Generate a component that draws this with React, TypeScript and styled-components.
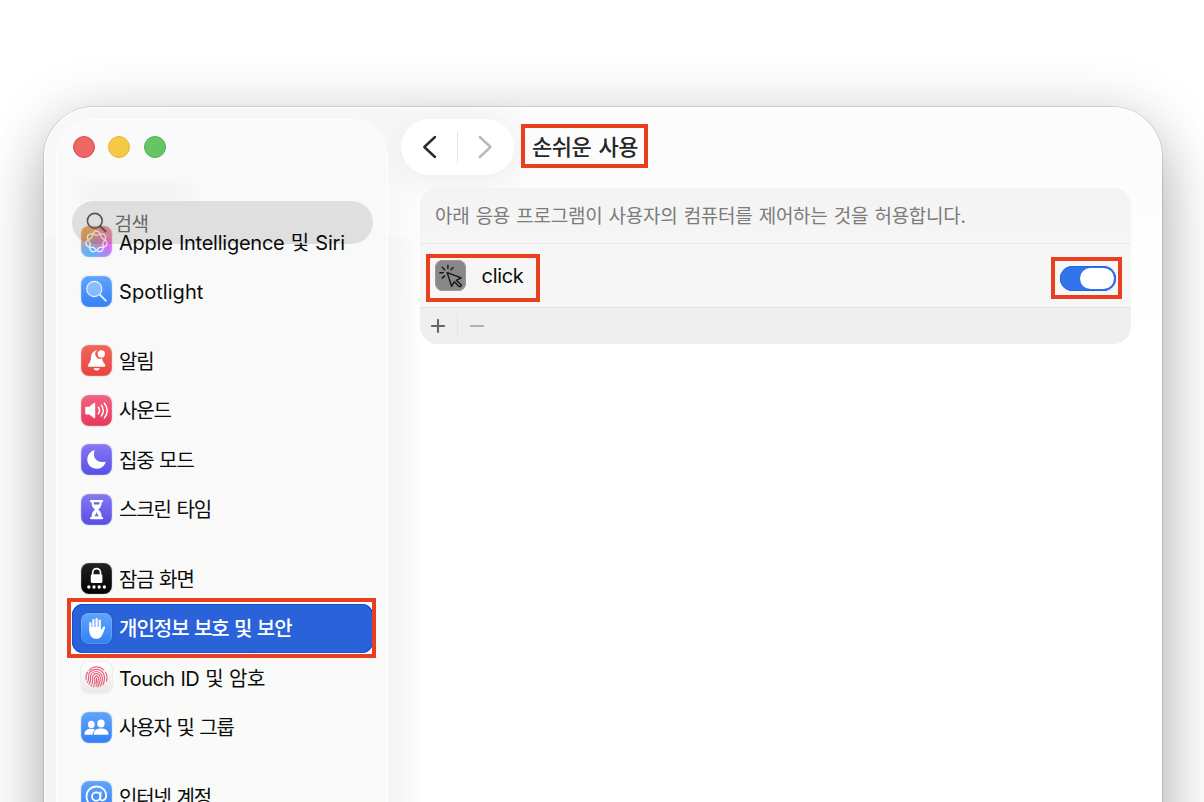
import React from "react";
import styled, { createGlobalStyle, css } from "styled-components";

const GlobalStyle = createGlobalStyle`
  html, body { margin: 0; padding: 0; background: #fff; overflow: hidden; }
  * { box-sizing: border-box; }
  body { font-family: Inter, "Noto Sans CJK KR", sans-serif; color: #0c0c0c; }
`;

const Desktop = styled.div`
  width: 1204px;
  height: 802px;
  overflow: hidden;
  padding: 107px 42px 0 44px;
  background: #fff;
`;

const Window = styled.div`
  display: flex;
  height: 960px;
  border-radius: 50px;
  background:
    linear-gradient(90deg, #f4f4f4 0, #f4f4f4 340px, rgba(255, 255, 255, 0) 376px) 0 130px / 100% 100% no-repeat,
    linear-gradient(90deg, #f8f8f8 0, #f7f7f7 340px, rgba(255, 255, 255, 0) 380px),
    linear-gradient(#fcfcfc 0, #fcfcfc 90px, #fefefe 150px, #fff 260px);
  box-shadow: inset 0 0 0 1px #fff, 0 0 0 1px rgba(0, 0, 0, 0.12), 0 34px 60px rgba(0, 0, 0, 0.24),
    0 4px 64px rgba(0, 0, 0, 0.14);
`;

const Sidebar = styled.aside`
  position: relative;
  width: 332px;
  margin: 12px 0 12px 12px;
  border-radius: 38px;
  border: 1px solid #fff;
  background: linear-gradient(#fafafa, #f9f9f9 120px, #fafaf9);
`;

const SidebarHeader = styled.div`
  position: absolute;
  inset: 0 0 auto 0;
  padding: 16px 14px 0 14.5px;
`;

const Lights = styled.div`
  display: flex;
  gap: 13.6px;
  padding-left: 1px;
`;

const Light = styled.span<{ $fill: string; $edge: string }>`
  width: 22px;
  height: 22px;
  border-radius: 50%;
  background: ${(p) => p.$fill};
  border: 1px solid ${(p) => p.$edge};
`;

const Search = styled.div`
  display: flex;
  align-items: center;
  gap: 8px;
  height: 43px;
  width: 301.5px;
  margin-top: 43px;
  padding: 0 0 1px 14px;
  border-radius: 22px;
  background: rgba(0, 0, 0, 0.1);
  color: #666;
  font-size: 19px;
  letter-spacing: -0.4px;
`;

const Smudge = styled.div`
  position: absolute;
  left: 22px;
  top: 66px;
  width: 110px;
  height: 12px;
  background: rgba(0, 0, 0, 0.035);
  filter: blur(8px);
`;

const List = styled.nav`
  display: flex;
  flex-direction: column;
  padding: 97px 14px 0 14.5px;
`;

const Item = styled.div<{ $active?: boolean; $first?: boolean }>`
  position: relative;
  display: flex;
  align-items: center;
  gap: 8px;
  width: 301.5px;
  height: 49.5px;
  margin-top: ${(p) => (p.$first ? "20px" : "0")};
  padding-left: 9.5px;
  border-radius: 11px;
  font-size: 20px;
  white-space: nowrap;
  ${(p) =>
    p.$active &&
    css`
      background: #2962d9;
      box-shadow: inset 0 0 0 1px #1450d0;
      color: #fff;
      font-weight: 500;
    `}
`;

const Label = styled.span<{ $track?: number }>`
  line-height: 28px;
  margin: 1.5px 0 0 -1px;
  word-spacing: 1px;
  letter-spacing: ${(p) => p.$track ?? 0}px;
`;

const Tile = styled.span<{ $bg: string }>`
  display: flex;
  flex: none;
  width: 31px;
  height: 31px;
  border-radius: 8px;
  background: ${(p) => p.$bg};
  box-shadow: inset 0 0 0 0.6px rgba(255, 255, 255, 0.25), 0 0 1.5px rgba(0, 0, 0, 0.25);
`;

const Main = styled.main`
  display: flex;
  flex-direction: column;
  flex: 1;
  padding: 12px 31px 0 13px;
`;

const Toolbar = styled.header`
  display: flex;
  align-items: center;
  height: 56px;
`;

const NavPill = styled.div`
  display: flex;
  align-items: center;
  justify-content: space-between;
  width: 113px;
  height: 56px;
  padding: 0 19px 0 19px;
  border-radius: 28px;
  background: #fff;
  box-shadow: 0 2px 36px rgba(0, 0, 0, 0.08);
`;

const Divider = styled.span<{ $h: number }>`
  width: 1px;
  height: ${(p) => p.$h}px;
  background: #e3e3e3;
`;

const Title = styled.h1`
  position: relative;
  margin: 0 0 0 18px;
  font-size: 22px;
  line-height: 32px;
  font-weight: 500;
  letter-spacing: -0.5px;
  word-spacing: 2px;
  color: #262626;
`;

const Marker = styled.span<{ $x: number; $y: number; $w: number; $h: number }>`
  position: absolute;
  left: ${(p) => p.$x}px;
  top: ${(p) => p.$y}px;
  width: ${(p) => p.$w}px;
  height: ${(p) => p.$h}px;
  border: 4px solid #e93e20;
`;

const Panel = styled.section`
  width: 711px;
  height: 156px;
  margin: 13px 0 0 19px;
  border-radius: 18px;
  background: #f6f6f6;
  overflow: hidden;
`;

const Description = styled.p`
  margin: 0;
  height: 56px;
  padding: 1px 15px 0;
  font-size: 19px;
  line-height: 56px;
  letter-spacing: -0.28px;
  word-spacing: 1.2px;
  color: #7b7b7b;
  background: linear-gradient(#f3f3f3, #f6f6f6);
  border-bottom: 1px solid #e8e8e8;
`;

const AppRow = styled.div`
  position: relative;
  display: flex;
  align-items: center;
  height: 64px;
  padding: 0 15.5px 0 15px;
  border-bottom: 1px solid #e1e1e1;
`;

const AppIcon = styled.span`
  display: flex;
  width: 31px;
  height: 31px;
  margin-bottom: 1px;
  border-radius: 8px;
  background: #888;
  box-shadow: inset 0 0 0 1px #999;
`;

const AppName = styled.span`
  margin: 1px auto 0 15.5px;
  font-size: 20px;
  line-height: 28px;
  letter-spacing: -0.3px;
`;

const Toggle = styled.span`
  display: flex;
  justify-content: flex-end;
  width: 56px;
  height: 25px;
  margin-top: 6px;
  padding: 2px;
  border-radius: 13px;
  background: #3274ea;
  box-shadow: inset 0 0 0 1px #2465df;
`;

const Knob = styled.span`
  width: 34px;
  height: 21px;
  border-radius: 11px;
  background: #fff;
`;

const PanelFooter = styled.div`
  display: flex;
  align-items: center;
  gap: 12px;
  height: 36px;
  padding-left: 11px;
  background: #efefef;
`;

// Seven-lobed rosette that closes after two turns.
const ROSETTE =
  Array.from({ length: 140 }, (_, i) => {
    const t = (i / 140) * Math.PI * 4;
    const r = 8.6 + 2.1 * Math.cos(3.5 * t);
    return `${i ? "L" : "M"}${(15.5 + r * Math.sin(t)).toFixed(2)} ${(15.8 - r * Math.cos(t)).toFixed(2)}`;
  }).join("") + "Z";

const SiriGlyph = () => (
  <svg width="31" height="31" viewBox="0 0 31 31" fill="none" stroke="#fff" strokeWidth="1.3" strokeLinejoin="round" opacity=".85">
    <path d={ROSETTE} />
  </svg>
);

const SpotlightGlyph = () => (
  <svg width="31" height="31" viewBox="0 0 31 31" fill="none" stroke="#e7f3ff" strokeLinecap="round">
    <circle cx="13.3" cy="13" r="7.6" fill="#a6d2ff" fillOpacity=".65" strokeWidth="1.1" />
    <path d="M19 18.8L24.8 24.7" strokeWidth="1.9" />
  </svg>
);

const BellGlyph = () => (
  <svg width="31" height="31" viewBox="0 0 31 31" fill="#fff">
    <path d="M16.4 5.3C12.2 5.6 10.3 8.7 10.1 12C9.9 15.8 9 17.6 7.3 19.3C6.3 20.4 6.8 21.7 8.1 21.7H23.1C24.4 21.7 24.8 20.4 23.9 19.3C22.3 17.5 21.5 16 21.1 13.2A4.6 4.6 0 0 1 16.4 5.3Z" />
    <circle cx="20.3" cy="8.9" r="3.6" />
    <path d="M12.5 23.2H18.7C18.2 26.2 13 26.2 12.5 23.2Z" />
  </svg>
);

const SoundGlyph = () => (
  <svg width="31" height="31" viewBox="0 0 31 31" fill="none" stroke="#fff" strokeWidth="1.5" strokeLinecap="round">
    <path d="M4.2 12.7C4.2 12 4.7 11.7 5.3 11.7H8.2L12.8 8C13.5 7.5 14.2 7.8 14.2 8.6V22.5C14.2 23.3 13.5 23.6 12.8 23.1L8.2 19.4H5.3C4.7 19.4 4.2 19.1 4.2 18.4Z" fill="#fff" stroke="none" />
    <path d="M17.3 12.3C18.7 14.1 18.7 17 17.3 18.8" />
    <path d="M20.3 10.2C22.9 13.3 22.9 17.8 20.3 20.9" />
    <path d="M23.4 8.2C27.1 12.5 27.1 18.6 23.4 22.9" />
  </svg>
);

const MoonGlyph = () => (
  <svg width="31" height="31" viewBox="0 0 31 31" fill="#fff">
    <path d="M12.4 6.4C13.2 6 13.7 6.4 13.4 7.3C11.5 13.6 15.6 19 23.4 17.9C24.4 17.7 24.8 18.2 24.4 19C22.8 22.7 19.7 24.8 15.8 24.8C10.3 24.8 6.3 20.8 6.3 15.5C6.3 11.4 8.8 7.8 12.4 6.4Z" />
  </svg>
);

const HourglassGlyph = () => (
  <svg width="31" height="31" viewBox="0 0 31 31" fill="none">
    <path d="M10.1 6H21.1Q22.3 6 22.3 7.1T21.1 8.2H20.6C20.6 12.2 19.5 13.8 17.1 15.6C19.5 17.4 20.6 19 20.6 23H21.1Q22.3 23 22.3 24.1T21.1 25.2H10.1Q8.9 25.2 8.9 24.1T10.1 23H10.6C10.6 19 11.7 17.4 14.1 15.6C11.7 13.8 10.6 12.2 10.6 8.2H10.1Q8.9 8.2 8.9 7.1T10.1 6Z" fill="#fff" />
    <path d="M12.6 8.2H18.6L18.2 10.4H13ZM15.6 17.4L16 19.6L17.8 22.3H13.4L15.2 19.6Z" fill="#6c61eb" />
  </svg>
);

const LockGlyph = () => (
  <svg width="31" height="31" viewBox="0 0 31 31" fill="#fff">
    <rect x="9.8" y="11.2" width="11.6" height="8.8" rx="1.6" />
    <path d="M11.7 12V9.8C11.7 4.3 19.5 4.3 19.5 9.8V12" fill="none" stroke="#fff" strokeWidth="1.7" />
    {[7.8, 13, 18.2, 23.4].map((x) => (
      <circle key={x} cx={x} cy="24" r="1.65" />
    ))}
  </svg>
);

const HandGlyph = () => (
  <svg width="31" height="31" viewBox="0 0 31 31" fill="none" stroke="#fff" strokeLinecap="round">
    <path d="M9.4 10.2V17M12.4 7V16M15.6 6V16M18.7 7.6V17" strokeWidth="2.2" />
    <path d="M8.3 14H19.8V17.4C20.7 16.3 21.6 14.6 22.3 13.8C23.1 12.9 24.5 13.6 24 15C22.9 18.2 21.7 21.7 20 23.9C18 26.4 13.3 26.4 10.8 24.2C8.8 22.4 8.3 19.8 8.3 17Z" fill="#fff" stroke="none" />
  </svg>
);

const TouchGlyph = () => (
  <svg width="31" height="31" viewBox="0 0 31 31" fill="none" stroke="#e8617a" strokeWidth="1.15" strokeLinecap="round">
    <path d="M8.2 8.2C12.3 3.7 18.9 3.7 22.9 8.2" />
    <path d="M5.2 17.8C4.7 14.8 5.2 12.2 6.6 10.2M24.5 10.2C26.2 12.8 26.3 16.1 25.5 19" />
    <path d="M6.5 20.2C9.4 16.5 5.8 14.1 8.6 10.4C12.3 6.2 18.9 6.3 22.1 10.8C24.2 14.2 23.8 18.5 22.1 22.7" />
    <path d="M8 22.1C11.2 18.3 8.2 15.2 10.3 12C13.2 8.5 18.2 8.8 20.5 12.5C22.4 16.3 21 20.6 19.5 24.2" />
    <path d="M10 23.8C13.5 19.7 10.3 16.7 12.1 13.5C14 10.8 17.4 11.2 18.9 13.9C20.3 17.5 18.5 21.7 16.9 25" />
    <path d="M12.4 25C15.8 20.6 12.3 17.7 13.9 15.2C15 13.6 16.6 13.9 17.2 15.5C18 18.2 16.7 21.2 15 24.4" />
    <path d="M15.5 16.5C16 18.4 15.6 19.8 14.9 21.2" />
  </svg>
);

const UsersGlyph = () => (
  <svg width="31" height="31" viewBox="0 0 31 31" fill="#fff">
    <ellipse cx="10.3" cy="12.4" rx="3.3" ry="3.6" />
    <path d="M3.5 22.8C3.1 18.7 6.7 16.8 10.2 16.8C11.7 16.8 13 17.1 14.1 17.8C12.4 19.1 11.5 20.8 11.6 22.8Z" />
    <ellipse cx="20" cy="11.5" rx="3.7" ry="4.1" />
    <path d="M12.7 22.8C12.1 18.5 16 16.6 20 16.6S27.9 18.5 27.3 22.8Z" />
  </svg>
);

const AtGlyph = () => (
  <svg width="31" height="31" viewBox="0 0 31 31" fill="none" stroke="#fff" strokeWidth="1.8" strokeLinecap="round">
    <circle cx="15.2" cy="15.6" r="4.2" />
    <path d="M19.7 11.5L19.2 17.2C19 20.6 24.8 20.4 25.2 15C25.4 9.2 21.2 5.5 15.7 5.5C9.7 5.5 5.5 9.8 5.5 15.5C5.5 21.5 9.7 25.6 15.5 25.6C17.6 25.6 19.3 25.2 20.8 24.5" />
  </svg>
);

const BLUE = "linear-gradient(#60a5fb, #3480f6)";
const PURPLE = "linear-gradient(#8579f5, #594ee6)";

type Entry = { label: string; bg: string; icon: React.ReactNode; first?: boolean; active?: boolean; track?: number };

const entries: Entry[] = [
  {
    label: "Apple Intelligence 및 Siri",
    bg: "radial-gradient(circle at 52% 48%, #c98aa0 0, transparent 48%), conic-gradient(from 20deg, #f0908e, #f28ea9, #dd6df0, #9b92fa, #54b7fb, #8ba7d8, #e8a25e, #ecab67, #f0908e)",
    icon: <SiriGlyph />,
    track: -0.25,
  },
  { label: "Spotlight", bg: BLUE, icon: <SpotlightGlyph />, track: 0.05 },
  { label: "알림", bg: "linear-gradient(#f1655d, #e8443e)", icon: <BellGlyph />, first: true, track: -1.1 },
  { label: "사운드", bg: "linear-gradient(#f26480, #e8375a)", icon: <SoundGlyph />, track: -1.1 },
  { label: "집중 모드", bg: PURPLE, icon: <MoonGlyph />, track: -1.1 },
  { label: "스크린 타임", bg: PURPLE, icon: <HourglassGlyph />, track: -1.1 },
  { label: "잠금 화면", bg: "linear-gradient(#222, #000)", icon: <LockGlyph />, first: true, track: -1.1 },
  { label: "개인정보 보호 및 보안", bg: BLUE, icon: <HandGlyph />, active: true, track: -1 },
  { label: "Touch ID 및 암호", bg: "linear-gradient(#fff, #e9e9e9)", icon: <TouchGlyph />, track: -0.58 },
  { label: "사용자 및 그룹", bg: BLUE, icon: <UsersGlyph />, track: -1.1 },
  { label: "인터넷 계정", bg: BLUE, icon: <AtGlyph />, first: true, track: -1.1 },
];

export default function App() {
  return (
    <Desktop>
      <GlobalStyle />
      <Window>
        <Sidebar>
          <List>
            {entries.map((e) => (
              <Item key={e.label} $first={e.first} $active={e.active}>
                <Tile $bg={e.bg}>{e.icon}</Tile>
                <Label $track={e.track}>{e.label}</Label>
                {e.active && <Marker $x={-4.5} $y={-6} $w={309} $h={60} />}
              </Item>
            ))}
          </List>
          <SidebarHeader>
            <Smudge />
            <Lights>
              <Light $fill="#ed6765" $edge="#e04b4c" />
              <Light $fill="#f4c944" $edge="#e6b63b" />
              <Light $fill="#65c466" $edge="#4cb350" />
            </Lights>
            <Search>
              <svg width="21" height="21" viewBox="0 0 21 21" fill="none" stroke="#555" strokeLinecap="round">
                <circle cx="8.8" cy="8.8" r="7.4" strokeWidth="1.6" />
                <path d="M14.2 14.2L19.4 19.2" strokeWidth="2.1" />
              </svg>
              <span>검색</span>
            </Search>
          </SidebarHeader>
        </Sidebar>
        <Main>
          <Toolbar>
            <NavPill>
              <svg width="20" height="26" viewBox="0 0 20 26" fill="none" stroke="#2b2b2b" strokeWidth="2.4" strokeLinecap="round" strokeLinejoin="round">
                <path d="M15 3L4.3 13L15 23" />
              </svg>
              <Divider $h={31} />
              <svg width="20" height="26" viewBox="0 0 20 26" fill="none" stroke="#b9b9b9" strokeWidth="2.4" strokeLinecap="round" strokeLinejoin="round">
                <path d="M4.8 3L15.5 13L4.8 23" />
              </svg>
            </NavPill>
            <Title>
              손쉬운 사용
              <Marker $x={-11} $y={-7} $w={127} $h={44} />
            </Title>
          </Toolbar>
          <Panel>
            <Description>아래 응용 프로그램이 사용자의 컴퓨터를 제어하는 것을 허용합니다.</Description>
            <AppRow>
              <AppIcon>
                <svg width="31" height="31" viewBox="0 0 31 31" fill="none" stroke="#171717" strokeWidth="1.4" strokeLinecap="round" strokeLinejoin="round">
                  <path d="M12.2 12.6L26.2 17.8L21.2 20.3L26.4 25.1Q26.4 26.7 24.4 26.8L19.1 21.8L16.6 26.3Z" />
                  <path d="M12.9 5.2V8.6M7.2 7.3L9.6 9.8M18.2 7.4L16 9.8M4.8 12.8H8.2M7.2 18.1L9.7 15.9" />
                </svg>
              </AppIcon>
              <AppName>click</AppName>
              <Toggle>
                <Knob />
              </Toggle>
              <Marker $x={6} $y={10} $w={114} $h={48} />
              <Marker $x={631} $y={13} $w={71} $h={42} />
            </AppRow>
            <PanelFooter>
              <svg width="14" height="14" viewBox="0 0 14 14" stroke="#666" strokeWidth="2.1" strokeLinecap="round">
                <path d="M7 1V13M1 7H13" />
              </svg>
              <Divider $h={24} />
              <svg width="14" height="14" viewBox="0 0 14 14" stroke="#b0b0b0" strokeWidth="2.1" strokeLinecap="round">
                <path d="M1 7H13" />
              </svg>
            </PanelFooter>
          </Panel>
        </Main>
      </Window>
    </Desktop>
  );
}
